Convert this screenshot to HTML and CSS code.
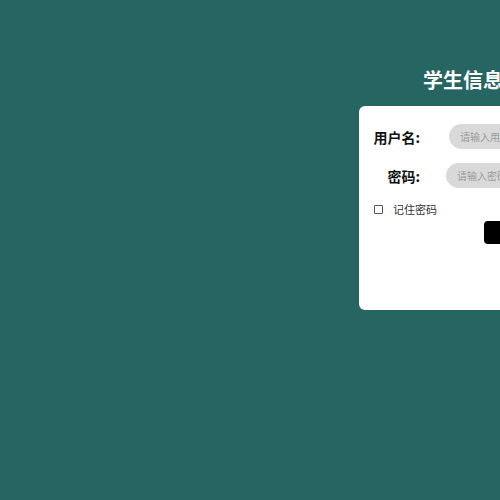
FILE: index.html
```html
<!DOCTYPE html>
<html lang="zh">
<head>
<meta charset="utf-8">
<link rel="stylesheet" href="styles.css">
</head>
<body>
<div class="page">
  <h1 class="title">学生信息管理系统</h1>
  <div class="card">
    <div class="row">
      <label class="label">用户名:</label>
      <input class="field" type="text" placeholder="请输入用户名">
    </div>
    <div class="row row2">
      <label class="label">密码:</label>
      <input class="field" type="password" placeholder="请输入密码">
    </div>
    <div class="remember">
      <span class="box"></span>
      <span class="remember-text">记住密码</span>
    </div>
    <div class="actions">
      <button class="btn">登录</button>
    </div>
  </div>
</div>
</body>
</html>
```
FILE: styles.css
```css
html, body {
  margin: 0;
  padding: 0;
  height: 100%;
  overflow: hidden;
  background: #276563;
  font-family: "Noto Sans CJK SC", "Noto Sans", sans-serif;
}
.page {
  padding-left: 359px;
  padding-top: 66px;
  width: 400px;
}
.title {
  margin: 0 0 12px 64px;
  font-size: 20px;
  line-height: 28px;
  font-weight: 700;
  color: #ffffff;
  white-space: nowrap;
}
.card {
  width: 320px;
  height: 204px;
  background: #ffffff;
  border-radius: 6px;
  padding-top: 18px;
  box-sizing: border-box;
}
.row {
  display: flex;
  align-items: center;
  height: 25px;
  gap: 29px;
}
.row2 {
  margin-top: 14px;
}
.label {
  width: 61px;
  text-align: right;
  font-size: 14px;
  font-weight: 700;
  color: #111;
  white-space: nowrap;
}
.field {
  width: 220px;
  height: 25px;
  border: none;
  outline: none;
  border-radius: 13px;
  background: #d9d9d9;
  padding: 0 11px;
  box-sizing: border-box;
  font-size: 10px;
  font-family: inherit;
  color: #333;
}
.row2 .field {
  margin-left: -3px;
}
.field::placeholder {
  color: #9a9a9a;
}
.remember {
  display: flex;
  align-items: center;
  margin-top: 13px;
  margin-left: 15px;
  gap: 10px;
  height: 16px;
}
.box {
  width: 7px;
  height: 7px;
  border: 1px solid #555;
  border-radius: 1px;
}
.remember-text {
  font-size: 11px;
  color: #333;
}
.actions {
  margin-top: 1px;
  padding-left: 125px;
}
.btn {
  width: 70px;
  height: 23px;
  background: #000;
  color: #fff;
  border: none;
  border-radius: 4px;
  font-size: 11px;
  font-family: inherit;
}
```
